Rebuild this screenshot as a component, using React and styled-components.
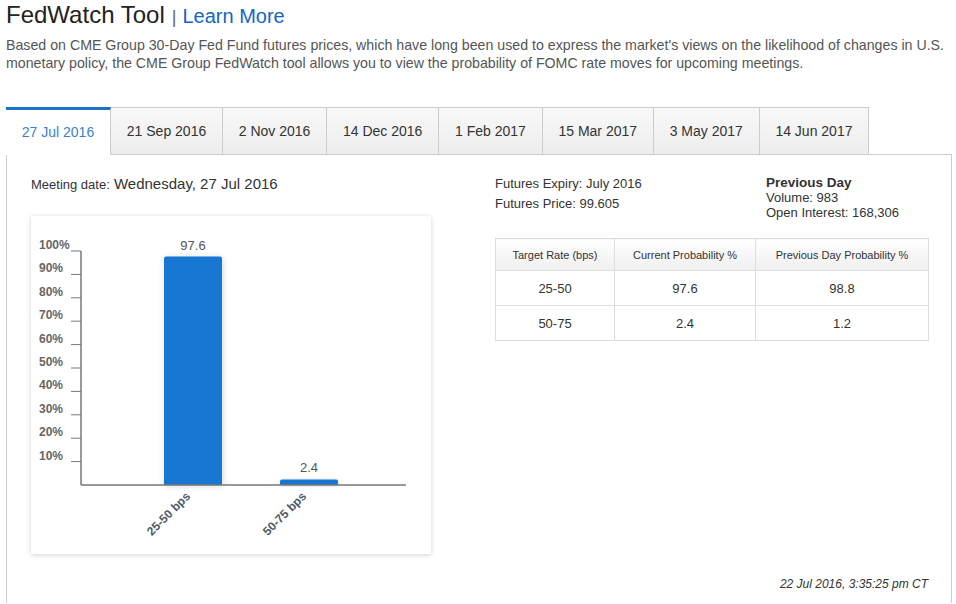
import styled, { createGlobalStyle } from "styled-components";

const GlobalStyle = createGlobalStyle`
  body {
    margin: 0;
    background: #fff;
    font-family: "Liberation Sans", Arial, sans-serif;
    color: #333;
  }
`;

const tabs = [
  "27 Jul 2016",
  "21 Sep 2016",
  "2 Nov 2016",
  "14 Dec 2016",
  "1 Feb 2017",
  "15 Mar 2017",
  "3 May 2017",
  "14 Jun 2017",
];

const rows = [
  ["25-50", "97.6", "98.8"],
  ["50-75", "2.4", "1.2"],
];

const ticks = [100, 90, 80, 70, 60, 50, 40, 30, 20, 10];
const axisTop = 35;
const axisBottom = 269;
const yFor = (v) => axisBottom - ((axisBottom - axisTop) * v) / 100;

const bars = [
  { label: "25-50 bps", value: 97.6, x: 133 },
  { label: "50-75 bps", value: 2.4, x: 249 },
];

const Chart = () => (
  <svg width="400" height="338" viewBox="0 0 400 338">
    <defs>
      <filter id="barShadow" x="-30%" y="-10%" width="160%" height="130%">
        <feDropShadow dx="1" dy="1" stdDeviation="3" floodColor="#000" floodOpacity="0.16" />
      </filter>
    </defs>
    {ticks.map((t) => (
      <g key={t}>
        <line x1="40" x2="50" y1={yFor(t)} y2={yFor(t)} stroke="#777" strokeWidth="1" />
        <text x="8" y={yFor(t) - 2} fontSize="12" fontWeight="bold" fill="#666" fontFamily="Liberation Sans, Arial, sans-serif">
          {t}%
        </text>
      </g>
    ))}
    <line x1="50" x2="50" y1={axisTop} y2={axisBottom} stroke="#777" strokeWidth="1.5" />
    {bars.map((b) => {
      const top = yFor(b.value);
      return (
        <g key={b.label}>
          <path
            d={`M${b.x} ${axisBottom} V${top + 2} Q${b.x} ${top} ${b.x + 2} ${top} H${b.x + 56} Q${b.x + 58} ${top} ${b.x + 58} ${top + 2} V${axisBottom} Z`}
            fill="#1976d2"
            filter="url(#barShadow)"
          />
          <text x={b.x + 29} y={top - 7} textAnchor="middle" fontSize="13" fill="#555" fontFamily="Liberation Sans, Arial, sans-serif">
            {b.value}
          </text>
          <text
            x={b.x + 27}
            y={axisBottom + 12}
            textAnchor="end"
            fontSize="12"
            fontWeight="bold"
            fill="#4f5966"
            fontFamily="Liberation Sans, Arial, sans-serif"
            transform={`rotate(-45 ${b.x + 27} ${axisBottom + 12})`}
          >
            {b.label}
          </text>
        </g>
      );
    })}
    <line x1="50" x2="375" y1={axisBottom} y2={axisBottom} stroke="#777" strokeWidth="1.5" />
  </svg>
);

const App = () => (
  <Page>
    <GlobalStyle />
    <Header>
      <Title>FedWatch Tool</Title>
      <Divider>|</Divider>
      <LearnMore href="#">Learn More</LearnMore>
    </Header>
    <Intro>
      Based on CME Group 30-Day Fed Fund futures prices, which have long been used to express the
      market's views on the likelihood of changes in U.S. monetary policy, the CME Group FedWatch tool
      allows you to view the probability of FOMC rate moves for upcoming meetings.
    </Intro>
    <TabBar>
      {tabs.map((t, i) => (
        <Tab key={t} $active={i === 0}>
          {t}
        </Tab>
      ))}
    </TabBar>
    <Panel>
      <LeftColumn>
        <MeetingDate>
          <small>Meeting date:</small> Wednesday, 27 Jul 2016
        </MeetingDate>
        <ChartCard>
          <Chart />
        </ChartCard>
      </LeftColumn>
      <RightColumn>
        <InfoRow>
          <InfoBlock>
            <div>Futures Expiry: July 2016</div>
            <div>Futures Price: 99.605</div>
          </InfoBlock>
          <PrevDay>
            <strong>Previous Day</strong>
            <div>Volume: 983</div>
            <div>Open Interest: 168,306</div>
          </PrevDay>
        </InfoRow>
        <ProbTable>
          <thead>
            <tr>
              <Th>Target Rate (bps)</Th>
              <Th>Current Probability %</Th>
              <Th>Previous Day Probability %</Th>
            </tr>
          </thead>
          <tbody>
            {rows.map((r) => (
              <tr key={r[0]}>
                {r.map((c, i) => (
                  <Td key={i}>{c}</Td>
                ))}
              </tr>
            ))}
          </tbody>
        </ProbTable>
      </RightColumn>
      <Timestamp>22 Jul 2016, 3:35:25 pm CT</Timestamp>
    </Panel>
  </Page>
);

export default App;

const Page = styled.div`
  padding: 0 4px 0 6px;
`;

const Header = styled.div`
  display: flex;
  align-items: baseline;
  padding-top: 1px;
`;

const Title = styled.h1`
  margin: 0;
  font-size: 24px;
  font-weight: normal;
  color: #222;
`;

const Divider = styled.span`
  font-size: 18px;
  color: #666;
  margin: 0 6px 0 7px;
`;

const LearnMore = styled.a`
  font-size: 20px;
  color: #1565c0;
  text-decoration: none;
`;

const Intro = styled.p`
  margin: 7px 0 0;
  font-size: 14.2px;
  line-height: 18px;
  color: #555;
`;

const TabBar = styled.div`
  display: flex;
  margin-top: 35px;
`;

const Tab = styled.div`
  height: 48px;
  box-sizing: border-box;
  display: flex;
  align-items: center;
  padding: 0 15.8px;
  font-size: 14px;
  color: ${(p) => (p.$active ? "#3b82c9" : "#333")};
  background: ${(p) => (p.$active ? "#fff" : "linear-gradient(#f8f8f8, #eeeded)")};
  border: 1px solid #ccc;
  border-top: ${(p) => (p.$active ? "3px solid #1a73c6" : "1px solid #ccc")};
  border-bottom: ${(p) => (p.$active ? "1px solid #fff" : "1px solid #ccc")};
  border-left: ${(p) => (p.$active ? "none" : "1px solid #ccc")};
  margin-bottom: -1px;
  position: relative;
  z-index: 1;
  & + & {
    border-left: none;
  }
`;

const Panel = styled.div`
  border: 1px solid #ccc;
  border-bottom: none;
  display: grid;
  grid-template-columns: 400px 434px;
  column-gap: 64px;
  padding: 20px 0 0 24px;
  min-height: 428px;
  position: relative;
`;

const LeftColumn = styled.div`
  display: flex;
  flex-direction: column;
`;

const MeetingDate = styled.div`
  font-size: 15px;
  color: #333;
  small {
    font-size: 13px;
  }
`;

const ChartCard = styled.div`
  margin-top: 24px;
  width: 400px;
  height: 338px;
  background: #fff;
  box-shadow: 0 1px 5px rgba(0, 0, 0, 0.18);
`;

const RightColumn = styled.div`
  display: flex;
  flex-direction: column;
`;

const InfoRow = styled.div`
  display: flex;
`;

const InfoBlock = styled.div`
  width: 271px;
  margin-top: -1px;
  font-size: 13px;
  line-height: 20px;
  color: #333;
`;

const PrevDay = styled.div`
  font-size: 13px;
  line-height: 15px;
  color: #333;
  strong {
    display: block;
    font-size: 13.5px;
  }
`;

const ProbTable = styled.table`
  margin-top: 18px;
  width: 434px;
  border-collapse: collapse;
`;

const Th = styled.th`
  height: 31px;
  padding: 0;
  font-size: 11px;
  font-weight: normal;
  color: #333;
  border: 1px solid #ddd;
  background: linear-gradient(#fff, #efefef);
  &:nth-child(1) {
    width: 118px;
  }
  &:nth-child(2) {
    width: 140px;
  }
`;

const Td = styled.td`
  height: 34px;
  padding: 0;
  text-align: center;
  font-size: 13px;
  color: #333;
  border: 1px solid #ddd;
`;

const Timestamp = styled.div`
  position: absolute;
  right: 23px;
  top: 422px;
  font-size: 12px;
  font-style: italic;
  color: #333;
`;
